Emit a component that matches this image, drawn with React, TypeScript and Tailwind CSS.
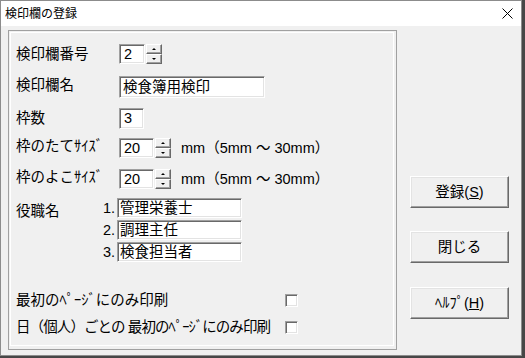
import React from "react"

const font = { fontFamily: '"Liberation Sans", "Noto Sans CJK JP", sans-serif' }

function Sunken({ className = "", children }: { className?: string; children?: React.ReactNode }) {
  return (
    <div
      className={`flex items-center bg-white border border-t-[#a0a0a0] border-l-[#a0a0a0] border-r-white border-b-white shadow-[inset_1px_1px_0_#696969,inset_-1px_-1px_0_#e3e3e3] ${className}`}
    >
      {children}
    </div>
  )
}

function SpinHalf({ up }: { up: boolean }) {
  return (
    <div className="flex-1 flex items-center justify-center bg-[#f0f0f0] border border-t-white border-l-white border-r-[#696969] border-b-[#696969] shadow-[inset_-1px_-1px_0_#a0a0a0]">
      {up ? (
        <div className="w-0 h-0 border-x-[2px] border-x-transparent border-b-[2px] border-b-black" />
      ) : (
        <div className="w-0 h-0 border-x-[2px] border-x-transparent border-t-[2px] border-t-black" />
      )}
    </div>
  )
}

function Spinner({ value, width }: { value: string; width: string }) {
  return (
    <div className="flex h-[20px]">
      <Sunken className={`${width} h-full pl-[4px]`}>{value}</Sunken>
      <div className="flex flex-col w-[16px] h-full ml-[1px]">
        <SpinHalf up />
        <SpinHalf up={false} />
      </div>
    </div>
  )
}

function Checkbox() {
  return (
    <div className="w-[13px] h-[13px] shrink-0 bg-white border border-t-[#a0a0a0] border-l-[#a0a0a0] border-r-white border-b-white shadow-[inset_1px_1px_0_#696969,inset_-1px_-1px_0_#e3e3e3]" />
  )
}

function DialogButton({ children, className = "" }: { children: React.ReactNode; className?: string }) {
  return (
    <div
      className={`w-[99px] h-[32px] flex items-center justify-center bg-[#f0f0f0] border border-t-white border-l-white border-r-[#696969] border-b-[#696969] shadow-[inset_-1px_-1px_0_#a0a0a0,inset_1px_1px_0_#e3e3e3] ${className}`}
    >
      {children}
    </div>
  )
}

export default function App() {
  return (
    <div className="w-[525px] h-[358px] bg-[#474747] overflow-hidden text-black" style={font}>
      <div className="w-[522px] h-[356px] flex flex-col bg-[#f0f0f0] border border-[#8c8c8c]">
        {/* Title bar */}
        <div className="h-[25px] bg-white flex items-center justify-between pl-[4px] pr-[6px]">
          <span className="text-[12px] leading-none">検印欄の登録</span>
          <svg width="11" height="11" viewBox="0 0 11 11" className="mr-[2px]">
            <path d="M0.5 0.5 L10.5 10.5 M10.5 0.5 L0.5 10.5" stroke="#000" strokeWidth="1" />
          </svg>
        </div>

        {/* Client area */}
        <div className="flex flex-1 text-[14.5px] leading-none">
          {/* Group box */}
          <div className="ml-[7px] mt-[4px] w-[389px] h-[320px] border border-[#a0a0a0] flex">
            <div className="flex-1 mt-[1px] ml-[1px] mr-[2px] mb-[3px] border border-white pl-[5px] pt-[11px] flex flex-col">
              <div className="flex items-center h-[20px]">
                <span className="w-[103px]">検印欄番号</span>
                <Spinner value="2" width="w-[26px]" />
              </div>

              <div className="flex items-center h-[22px] mt-[12px]">
                <span className="w-[103px] -mt-[3px]">検印欄名</span>
                <Sunken className="w-[146px] h-full pl-[3px]">検食簿用検印</Sunken>
              </div>

              <div className="flex items-center h-[21px] mt-[10px]">
                <span className="w-[103px]">枠数</span>
                <Sunken className="w-[25px] h-full pl-[4px]">3</Sunken>
              </div>

              <div className="flex items-center h-[20px] mt-[9px]">
                <span className="w-[103px] -mt-[4px]">枠のたてｻｲｽﾞ</span>
                <Spinner value="20" width="w-[35px]" />
                <span className="ml-[10px]">mm（5mm ～ 30mm）</span>
              </div>

              <div className="flex items-center h-[20px] mt-[11px]">
                <span className="w-[103px] -mt-[4px]">枠のよこｻｲｽﾞ</span>
                <Spinner value="20" width="w-[35px]" />
                <span className="ml-[10px]">mm（5mm ～ 30mm）</span>
              </div>

              <div className="flex mt-[9px]">
                <span className="w-[86px] mt-[6px]">役職名</span>
                <div className="flex flex-col gap-[2px]">
                  {["管理栄養士", "調理主任", "検食担当者"].map((t, i) => (
                    <div key={t} className="flex items-center h-[20px]">
                      <span className="w-[15px] pr-[2px] text-right">{i + 1}.</span>
                      <Sunken className="w-[125px] h-full pl-[2px]">{t}</Sunken>
                    </div>
                  ))}
                </div>
              </div>

              <div className="flex items-center h-[13px] mt-[32px]">
                <span className="w-[269px]">最初のﾍﾟｰｼﾞにのみ印刷</span>
                <Checkbox />
              </div>

              <div className="flex items-center h-[13px] mt-[14px]">
                <span className="w-[269px] whitespace-nowrap tracking-[-0.9px]">日（個人）ごとの 最初のﾍﾟｰｼﾞにのみ印刷</span>
                <Checkbox />
              </div>
            </div>
          </div>

          {/* Buttons */}
          <div className="ml-[13px] pt-[150px] flex flex-col">
            <DialogButton>
              登録(<span className="underline">S</span>)
            </DialogButton>
            <DialogButton className="mt-[23px]">閉じる</DialogButton>
            <DialogButton className="mt-[24px]">
              ﾍﾙﾌﾟ(<span className="underline">H</span>)
            </DialogButton>
          </div>
        </div>
      </div>
    </div>
  )
}
